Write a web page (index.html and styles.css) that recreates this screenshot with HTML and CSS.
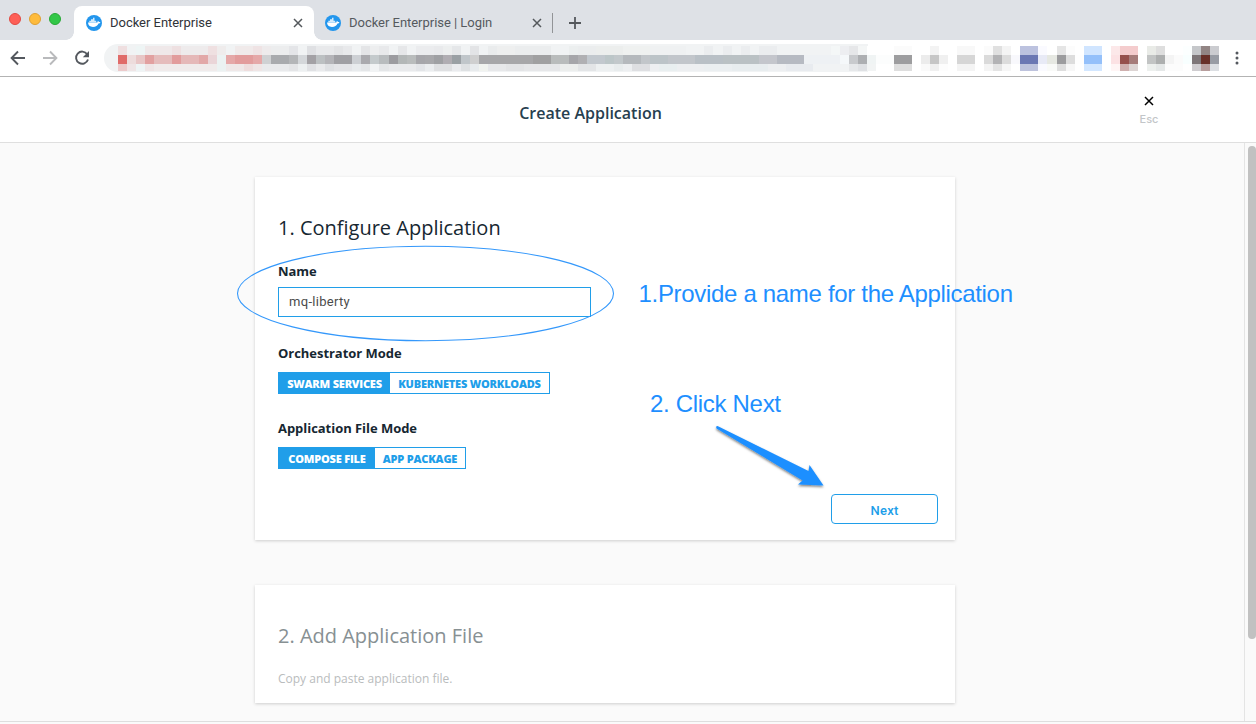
FILE: index.html
```html
<!DOCTYPE html>
<html lang="en">
<head>
<meta charset="utf-8">
<title>Docker Enterprise</title>
<link rel="stylesheet" href="styles.css">
</head>
<body>
<svg width="0" height="0" class="defs">
  <symbol id="whale" viewBox="0 0 16 16">
    <circle cx="8" cy="8" r="8" fill="#2396ed"/>
    <path d="M2 7.600h9.200c.5-.4.4-1.200.7-1.800.6.300.8.800.9 1.300.6-.1 1.200 0 1.600.3-.4.8-1.100 1-1.900 1-.9 2.300-2.700 3.500-5.500 3.500C3.900 11.900 2 10.400 2 7.600z" fill="#fff"/>
    <path d="M3.300 5.700h6.900v1.700H3.300zM5 4.200h3.500v1.500H5zM7 2.800h1.500v1.500H7z" fill="#d5ebfb"/>
  </symbol>
  <symbol id="close" viewBox="0 0 10 10"><path d="M1 1l8 8M9 1L1 9" fill="none" stroke="currentColor" stroke-width="1.5"/></symbol>
</svg>
<div class="browser">
  <div class="tabstrip">
    <div class="lights"><i class="light red"></i><i class="light yellow"></i><i class="light green"></i></div>
    <div class="tab active">
      <svg class="favicon"><use href="#whale"/></svg>
      <span class="tab-title">Docker Enterprise</span>
      <svg class="tab-close"><use href="#close"/></svg>
    </div>
    <div class="tab">
      <svg class="favicon"><use href="#whale"/></svg>
      <span class="tab-title">Docker Enterprise | Login</span>
      <svg class="tab-close"><use href="#close"/></svg>
    </div>
    <div class="tab-divider"></div>
    <svg class="new-tab" viewBox="0 0 12 12"><path d="M6 0v12M0 6h12" stroke="#54585c" stroke-width="1.8"/></svg>
  </div>
  <div class="toolbar">
    <svg class="nav" viewBox="0 0 16 16"><path d="M15 8H2M8 1.500L1.600 8 8 14.500" fill="none" stroke="#54585e" stroke-width="1.900"/></svg>
    <svg class="nav" viewBox="0 0 16 16"><path d="M1 8h13M8 1.500L14.400 8 8 14.500" fill="none" stroke="#b9babc" stroke-width="1.900"/></svg>
    <svg class="nav" viewBox="0 0 16 16"><path d="M13.200 4.200A6.100 6.100 0 1 0 14 9.500" fill="none" stroke="#54585e" stroke-width="1.900"/><path d="M15 1v6.200H8.800z" fill="#54585e"/></svg>
    <div class="address"></div>
    <svg class="kebab" viewBox="0 0 4 14"><circle cx="2" cy="2" r="1.500"/><circle cx="2" cy="7" r="1.500"/><circle cx="2" cy="12" r="1.500"/></svg>
    <svg class="mosaic" id="mosaic" width="1256" height="36" viewBox="0 40 1256 36"></svg>
  </div>
</div>
<header class="page-header">
  <h1>Create Application</h1>
  <div class="dismiss">
    <svg viewBox="0 0 10 10"><use href="#close"/></svg>
    <span>Esc</span>
  </div>
</header>
<div class="viewport">
  <main>
    <section class="card configure">
      <h2>1. Configure Application</h2>
      <label class="name-label">Name</label>
      <div class="input">mq-liberty</div>
      <label class="orch-label">Orchestrator Mode</label>
      <div class="toggle orchestrator"><span class="on">SWARM SERVICES</span><span>KUBERNETES WORKLOADS</span></div>
      <label class="file-label">Application File Mode</label>
      <div class="toggle filemode"><span class="on">COMPOSE FILE</span><span>APP PACKAGE</span></div>
      <div class="next">Next</div>
    </section>
    <section class="card add-file">
      <h2>2. Add Application File</h2>
      <p>Copy and paste application file.</p>
    </section>
  </main>
  <aside class="scrollbar"><div class="thumb"></div></aside>
</div>
<svg class="annotations" width="1256" height="724" viewBox="0 0 1256 724">
  <defs><filter id="shadow" x="-10%" y="-10%" width="120%" height="130%"><feDropShadow dx="0" dy="1.500" stdDeviation="1.300" flood-color="#000" flood-opacity=".5"/></filter></defs>
  <ellipse cx="425.500" cy="293.500" rx="188" ry="47.200" fill="none" stroke="#3498fb" stroke-width="1.100"/>
  <text x="638.500" y="302" textLength="374.500">1.Provide a name for the Application</text>
  <text x="650" y="412" textLength="131">2. Click Next</text>
  <path d="M717.500 426L808.500 471 809.500 465 823.500 485.500 798 484.500 802.500 480.500 716.500 428.500Q715.500 426 717.500 426z" fill="#1e8fff" filter="url(#shadow)"/>
</svg>
<script src="mosaic.js"></script>
</body>
</html>
```
FILE: styles.css
```css
* { box-sizing: border-box; }
body { margin: 0; width: 1256px; height: 724px; overflow: hidden; background: #fafafa; font-family: "Open Sans", sans-serif; color: #162731; position: relative; }
.defs { position: absolute; }
.browser { height: 77px; background: #fff; border-bottom: 1px solid #b3b3b3; }
.tabstrip { height: 40px; background: #dee1e6; display: flex; align-items: flex-start; }
.lights { display: flex; gap: 8px; padding: 13px 0 0 9px; width: 74px; }
.light { width: 12px; height: 12px; border-radius: 50%; border: 1px solid; }
.red { background: #fe5f57; border-color: #e24a43; }
.yellow { background: #febb3c; border-color: #dfa033; }
.green { background: #32c748; border-color: #28a936; }
.tab { display: flex; align-items: center; height: 34px; margin-top: 6px; width: 239px; padding: 0 11px; font: 13px Roboto, sans-serif; color: #55595e; position: relative; }
.tab-title { flex: 1; margin-left: 8px; padding-bottom: 2px; letter-spacing: -.03px; white-space: nowrap; }
.tab.active { width: 240px; background: #fff; border-radius: 8px 8px 0 0; padding-left: 12px; color: #303338; }
.tab.active::before, .tab.active::after { content: ""; position: absolute; bottom: 0; width: 8px; height: 8px; }
.tab.active::before { left: -8px; background: radial-gradient(circle at 0 0, #dee1e6 7.5px, #fff 8px); }
.tab.active::after { right: -8px; background: radial-gradient(circle at 100% 0, #dee1e6 7.5px, #fff 8px); }
.favicon { width: 16px; height: 16px; }
.tab-close { width: 10px; height: 10px; color: #54585c; }
.tab-divider { width: 1px; height: 20px; margin-top: 13px; background: #929497; margin-left: -1px; }
.new-tab { width: 12px; height: 12px; margin: 17px 0 0 16px; }
.toolbar { height: 36px; display: flex; align-items: center; padding-left: 10px; gap: 16px; position: relative; }
.nav { width: 16px; height: 16px; }
.address { width: 764px; height: 28px; margin-left: -2px; border-radius: 14px 0 0 14px; background: #f1f3f4; }
.kebab { width: 4px; height: 14px; margin-left: 351px; fill: #54585e; }
.mosaic { position: absolute; left: 0; top: 0; }
.page-header { height: 66px; background: #fff; border-bottom: 1px solid #dfdfdf; display: grid; grid-template-columns: 1129px 40px; }
.page-header h1 { margin: 0; width: 1181px; text-align: center; font-size: 16px; line-height: 22px; padding-top: 25px; font-weight: 600; color: #27404f; }
.dismiss { display: flex; flex-direction: column; align-items: center; width: 40px; padding-top: 19px; color: #000; }
.dismiss svg { width: 10px; height: 10px; }
.dismiss span { margin-top: 6px; font: 500 11px/14px Inter, sans-serif; color: #c3c6c9; }
.viewport { height: 579px; display: flex; border-bottom: 1px solid #dedede; }
main { width: 1244px; padding: 34px 0 0 255px; }
.card { width: 700px; background: #fff; box-shadow: 0 1px 3px rgba(0,0,0,.18); padding-left: 23px; display: flex; flex-direction: column; align-items: flex-start; }
.configure { height: 363px; }
.card h2 { margin: 37px 0 0; font-size: 20px; line-height: 28px; font-weight: 400; }
.card label { font-size: 13px; line-height: 18px; font-weight: 700; letter-spacing: -.04px; }
.name-label { margin-top: 20px; }
.input { width: 313px; height: 30px; margin-top: 7px; border: 1px solid #209ee9; padding-left: 10px; font: 13px/27px Roboto, sans-serif; color: #4b4b4b; letter-spacing: .3px; }
.orch-label { margin-top: 27px; }
.toggle { display: flex; height: 22px; margin-top: 10px; border: 1px solid #209ee9; font-size: 11px; line-height: 21px; font-weight: 800; letter-spacing: -.2px; color: #209ee9; white-space: nowrap; }
.toggle span { flex: 1; text-align: center; }
.toggle .on { background: #209ee9; color: #fff; }
.orchestrator { width: 272px; }
.orchestrator .on { flex: 0 0 111px; }
.file-label { margin-top: 25px; }
.filemode { width: 188px; }
.filemode .on { flex: 0 0 96px; }
.next { width: 107px; height: 30px; margin: 25px 0 0 553px; border: 1px solid #209ee9; border-radius: 4px; text-align: center; font: 500 13px/31px Roboto, sans-serif; letter-spacing: .2px; color: #209ee9; }
.add-file { margin-top: 45px; height: 118px; }
.add-file h2 { color: #879093; }
.add-file p { margin: 20px 0 0; font-size: 12px; line-height: 18px; color: #b9bcbd; }
.scrollbar { width: 12px; border-left: 1px solid #e4e4e4; padding: 3px 0 0 3px; }
.thumb { width: 8px; height: 493px; border-radius: 4px; background: #c1c1c1; }
.annotations { position: absolute; left: 0; top: 0; }
.annotations text { font: 24px "Liberation Sans", sans-serif; fill: #1e8fff; }
```
FILE: mosaic.js
```js
// Pixelated strip over the address and extension icons: rows of "color*count" runs.
const pitch = 9.027, start = 117.7;
const rows = [
  [45.7, 9, "efdfe0 f1f3f4 eef5f5 efe8e9*3 eee0e1 eeebec*3 efe0e1 efecec f1f3f4 f0eaea*2 efe3e4 eeebec ecedee*2 e4e5e8 f1f3f4 dfe0e3 e8e9eb*2 e3e4e6 e8e9eb f1f3f4 e4e5e7 edeeef e8e9eb f1f3f4 e6e7e9 f1f3f4 ebecee*2 e9eaec edefef e5e7e9 f1f3f4 e3e4e6 f1f3f4 eaeced eeefef*2 ebedee*4 f1f3f4*2 ecefef ebedee*2 eceeed*3 eff1f0*3 eff1f2*4 f1f3f4*2 ebedef f1f3f4 ebedef f1f3f4 ebedef f1f3f4 ebedef*2 f1f3f4*6 f4f7f7 edeef1 e6e7e9 f4f6f6 ffffff*3 fbfbfb*2 ffffff*2 f3f3f3 ffffff*2 f8f8f8*2 ffffff fbfbfb e0e0e0 f4f4f4 ffffff bcc2df*2 fafaff ffffff e5e5e5 fcfcfc ffffff d0e5ff*2 ffffff fce8e9 f4cccd*2 ffffff e9ebe7 dedede ffffff*2 fcffff c5c7ca 928584 cbccd0"],
  [54.7, 9, "e06b69 eddcdc e8c6c6 e2a0a0 e5bcbc*2 e29c9c e5b8b8*2 e2a8a8 ead5d8 ebf2f2 e5a8a8 e29c9c*2 e5a8a8 cfd1d3 a9abae*2 b4b6b8 d4d7da a3a1a5 bcc0c2 b4b4b8 a0a0a4*2 cdd0d4 aaaaae c4cacc b8bcbe 9c9ca0 b3b7b7 b9bcbc a6a6aa a8a8ab 9fa0a3 b0adb2 9aa0a4 c0c6ca cfcfcf a7a7a9*6 a0a0a1*2 b9bcbc*2 a6a6aa b0b0b3 c2c8ce*2 bcc6c8 c2c8cb b5b9bd*2 c2c6ca bcc4c8*2 c2c6cb*3 b9c0c6*3 bac1c4*4 c4c6cc*2 b6bac2*3 eef1f4*4 f5f8fa c8cacd adafb2 f0f4f4 fcfdfd*2 9d9d9f*2 ffffff ececec c6c6c6 f0f0f0 ffffff d6d6d6*2 ffffff dadada b3b3b5 dcdcdc f8f8fc 6b77b3*2 e8eaf6 e6e8e2 9c9c9e dddddd fefefe 94c0fa*2 ffffff fce2e4 95504c a67c7a ffffff c2c4c4 adafaf f4f4f4 fbfbfb f8ffff 7d7678 683028 989ca4"],
  [63.7, 7.5, "eccacb efe5e6 eef4f5 efe5e6 f0ebeb*7 ebf2f2 efe8e8*2 eedddd efe5e5 e9eaec*3 e4e5e7 edf0f1 e0e1e4 e9eaec dfe1e4 e4e5e8*2 e8ebed e4e6e8 f1f3f4 e4e6e8 e9eaec*3 e3e5e8 ebedef dfe0e2*2 eaebee dee1e3 e8ebed f1f3ef e7e8ea*2 e3e4e6*2 e6e7e9*4 eceeed*2 e3e5e7*2 edf0f1*2 e8eced edeff1 dedfe2*2 edeff1 e9eff0*2 edeff1*3 ebeff1*3 e8edef*4 edeff1*2 e8ebef*3 f1f3f4*4 e6e8ea dfe1e4 f2f4f4 ffffff*2 dedede*2 ffffff fafafa f0f0f0 fdfdfd ffffff f4f4f4*2 ffffff f4f4f4 e4e4e4 f6f6f6 ffffff bec3dd*2 fafaff f9faf8 dedede f7f7f7 ffffff d3e7ff*2 ffffff fff5f5 cfb0af ddd5d4 ffffff edf0ee e5e8e8 fcfcfc*2 ffffff cfcdd0 b79e9d dcdfe3"]
];
const svg = document.getElementById("mosaic");
for (const [y, height, runs] of rows) {
  let cell = 0;
  for (const run of runs.split(" ")) {
    const [color, count = "1"] = run.split("*");
    const rect = document.createElementNS("http://www.w3.org/2000/svg", "rect");
    const x = Math.round(start + cell * pitch);
    cell += Number(count);
    rect.setAttribute("x", x);
    rect.setAttribute("y", y);
    rect.setAttribute("width", Math.round(start + cell * pitch) - x);
    rect.setAttribute("height", height);
    rect.setAttribute("fill", "#" + color);
    rect.setAttribute("shape-rendering", "crispEdges");
    svg.appendChild(rect);
  }
}
```
